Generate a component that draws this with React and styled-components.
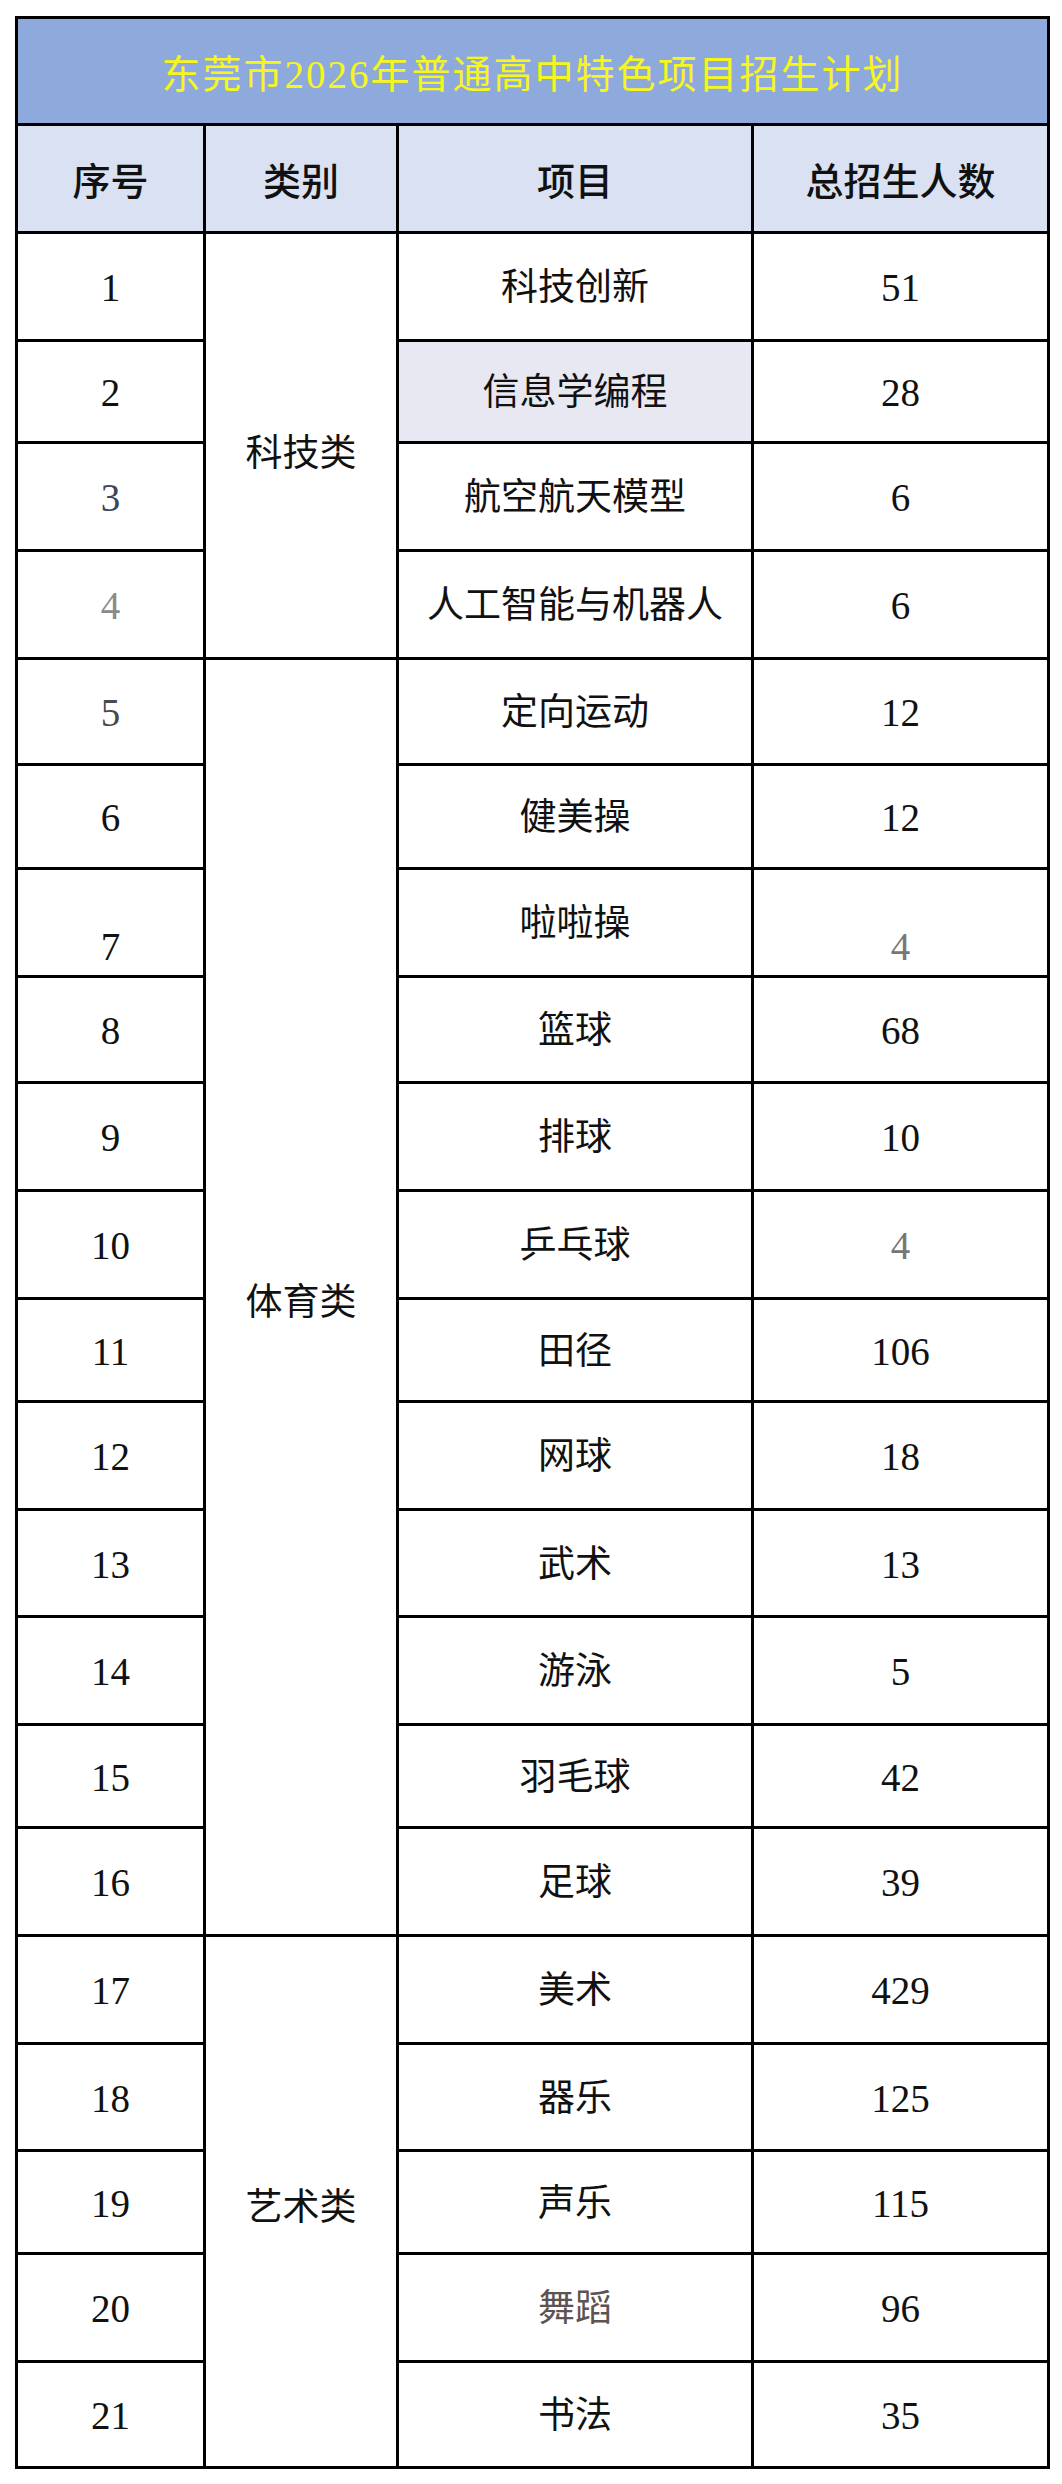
import React from "react";
import styled, { createGlobalStyle } from "styled-components";

const GlobalStyle = createGlobalStyle`
  html, body {
    margin: 0;
    padding: 0;
    background: #ffffff;
  }
`;

const rows = [
  { n: 1, item: "科技创新", count: 51, h: 108 },
  { n: 2, item: "信息学编程", count: 28, h: 102, highlight: true },
  { n: 3, item: "航空航天模型", count: 6, h: 108, nColor: "#3b4658" },
  { n: 4, item: "人工智能与机器人", count: 6, h: 108, nColor: "#8a8a8a" },
  { n: 5, item: "定向运动", count: 12, h: 106, nColor: "#4a4a4a" },
  { n: 6, item: "健美操", count: 12, h: 104 },
  { n: 7, item: "啦啦操", count: 4, h: 108, bottom: true, cColor: "#777777" },
  { n: 8, item: "篮球", count: 68, h: 106 },
  { n: 9, item: "排球", count: 10, h: 108 },
  { n: 10, item: "乒乓球", count: 4, h: 108, cColor: "#777777" },
  { n: 11, item: "田径", count: 106, h: 103 },
  { n: 12, item: "网球", count: 18, h: 108 },
  { n: 13, item: "武术", count: 13, h: 107 },
  { n: 14, item: "游泳", count: 5, h: 108 },
  { n: 15, item: "羽毛球", count: 42, h: 103 },
  { n: 16, item: "足球", count: 39, h: 108 },
  { n: 17, item: "美术", count: 429, h: 108 },
  { n: 18, item: "器乐", count: 125, h: 107 },
  { n: 19, item: "声乐", count: 115, h: 103 },
  { n: 20, item: "舞蹈", count: 96, h: 108, iColor: "#5e5252" },
  { n: 21, item: "书法", count: 35, h: 106 },
];

// category cells: which row they start on and how many rows they cover
const categories = {
  1: { name: "科技类", span: 4, shift: 8 },
  5: { name: "体育类", span: 12, shift: 4 },
  17: { name: "艺术类", span: 5, shift: 4 },
};

const Page = styled.div`
  padding: 16px 12px 16px 15px;
`;

const Table = styled.table`
  width: 1032px;
  border-collapse: collapse;
  table-layout: fixed;
  font-family: "Liberation Serif", "Noto Sans CJK SC", serif;
  font-size: 37px;
  color: #111111;
`;

const Col = styled.col`
  width: ${(p) => p.w}px;
`;

const TitleCell = styled.th`
  height: 104px;
  border: 3px solid #000;
  background: #8ea9db;
  color: #f6f61e;
  font-weight: 400;
  font-size: 39px;
  letter-spacing: 2px;
  text-align: center;
  vertical-align: middle;
  padding: 0;
`;

const HeadCell = styled.th`
  height: 105px;
  border: 3px solid #000;
  background: #d9e1f2;
  font-weight: 500;
  font-size: 38px;
  text-align: center;
  vertical-align: middle;
  padding: 0;
`;

const Cell = styled.td`
  height: ${(p) => p.h - 3 - (p.$bottom ? 4 : 4)}px;
  border: 3px solid #000;
  background: ${(p) => (p.$highlight ? "#e8e8f3" : "#ffffff")};
  color: ${(p) => p.$color || "#111111"};
  font-size: ${(p) => (p.$num ? 39 : 37)}px;
  text-align: center;
  vertical-align: ${(p) => (p.$bottom ? "bottom" : "middle")};
  padding: ${(p) => (p.$bottom ? "0 0 4px" : "4px 0 0")};
  line-height: 1.2;
`;

const CategoryCell = styled.td`
  border: 3px solid #000;
  background: #ffffff;
  text-align: center;
  vertical-align: middle;
  padding: ${(p) => p.$shift}px 0 0;
`;

export default function App() {
  return (
    <Page>
      <GlobalStyle />
      <Table>
        <colgroup>
          <Col w={188} />
          <Col w={193} />
          <Col w={355} />
          <Col w={296} />
        </colgroup>
        <thead>
          <tr>
            <TitleCell colSpan={4}>东莞市2026年普通高中特色项目招生计划</TitleCell>
          </tr>
          <tr>
            <HeadCell>序号</HeadCell>
            <HeadCell>类别</HeadCell>
            <HeadCell>项目</HeadCell>
            <HeadCell>总招生人数</HeadCell>
          </tr>
        </thead>
        <tbody>
          {rows.map((r) => {
            const cat = categories[r.n];
            return (
              <tr key={r.n}>
                <Cell h={r.h} $num $color={r.nColor} $bottom={r.bottom}>
                  {r.n}
                </Cell>
                {cat && (
                  <CategoryCell rowSpan={cat.span} $shift={cat.shift}>
                    {cat.name}
                  </CategoryCell>
                )}
                <Cell h={r.h} $highlight={r.highlight} $color={r.iColor}>
                  {r.item}
                </Cell>
                <Cell h={r.h} $num $color={r.cColor} $bottom={r.bottom}>
                  {r.count}
                </Cell>
              </tr>
            );
          })}
        </tbody>
      </Table>
    </Page>
  );
}
